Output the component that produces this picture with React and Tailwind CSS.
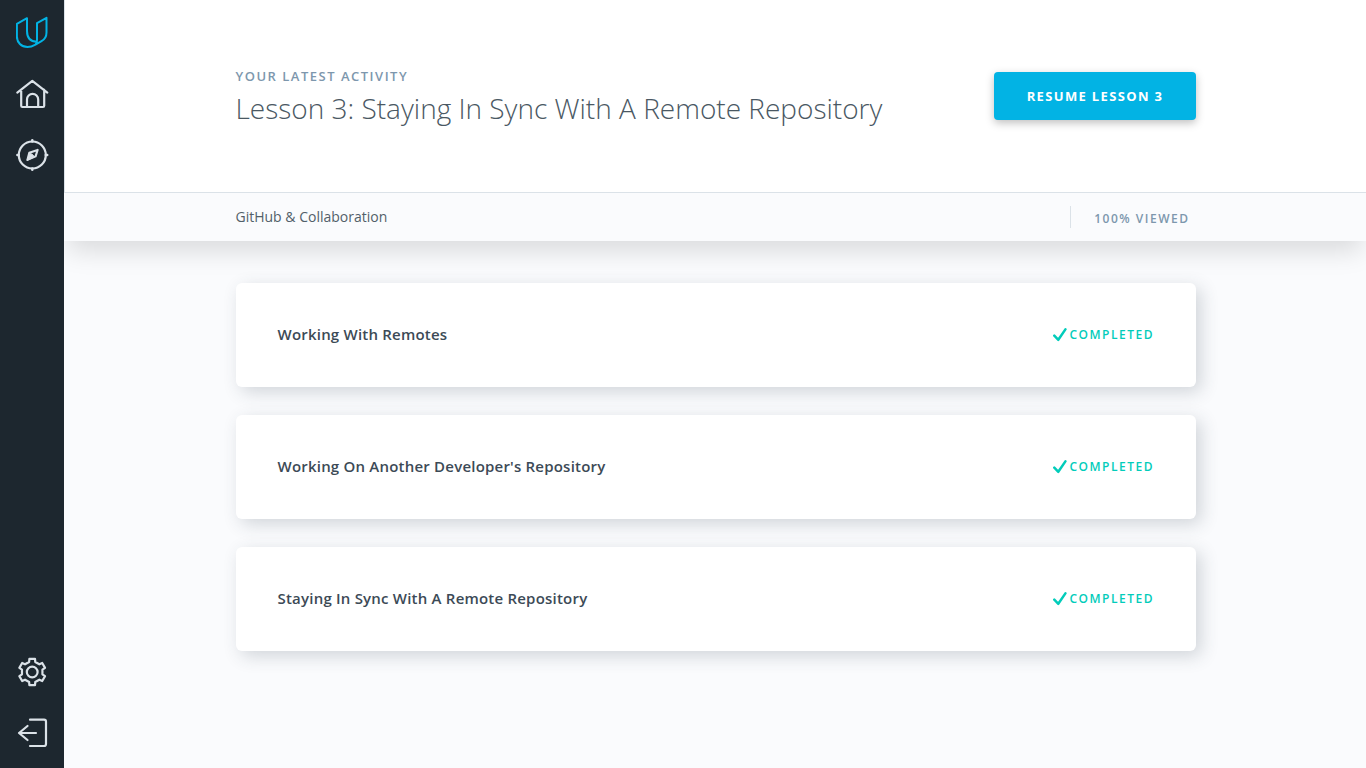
const lessons = [
  'Working With Remotes',
  "Working On Another Developer's Repository",
  'Staying In Sync With A Remote Repository',
];

const polar = (radius, degrees) => {
  const a = (degrees * Math.PI) / 180;
  return `${(16.2 + radius * Math.cos(a)).toFixed(2)} ${(16 + radius * Math.sin(a)).toFixed(2)}`;
};

const gearOutline = `M${[-90, -30, 30, 90, 150, 210]
  .flatMap((c) => [polar(10.5, c - 17), polar(13.5, c - 12), polar(13.5, c + 12), polar(10.5, c + 17)])
  .join('L')}Z`;

function Icon({ className, children }) {
  return (
    <svg
      width="32"
      height="32"
      viewBox="0 0 32 32"
      fill="none"
      stroke="currentColor"
      strokeWidth="2.2"
      strokeLinecap="round"
      strokeLinejoin="round"
      className={className}
    >
      {children}
    </svg>
  );
}

function Sidebar() {
  return (
    <aside className="relative z-10 flex w-16 shrink-0 flex-col items-center bg-[#1d272f] pt-4 pb-[19px] text-[#dbe2e8]">
      <Icon className="text-[#02b3e4]">
        <path strokeWidth="2" d="M11 2.2 0.9 7.8V20.5C0.9 26.5 5.3 31 11.5 31C14.5 31 17 30 19.5 28.6L25.5 25.2C29 23.2 30.5 20.5 30.5 16.5V1.8L21 7.2V22C21 25.5 21.4 27 19.5 28.6M11 2.2V15C11 21.5 14.5 25.6 20.8 25.8" />
      </Icon>
      <Icon className="mt-[30px] overflow-visible">
        <path d="M1.3 14.6 16.3 2.8 31.3 14.6M5.2 11.8V27.8Q5.2 29 6.4 29H27Q28.2 29 28.2 27.8V11.8M11 29V21.5a5.6 5.6 0 0 1 11.2 0V29" />
      </Icon>
      <Icon className="mt-[29px] overflow-visible">
        <circle cx="16.3" cy="16" r="13.5" />
        <path strokeWidth="2.5" d="M16.3 2.4V1.3M16.3 30.7V29.6M2.8 16H1.4M31.2 16H29.8" />
        <path strokeWidth="2.1" d="M21.6 10.9 19.6 17.4 11.4 20.9 13.3 13.8Z" />
        <path fill="currentColor" strokeWidth="1" d="M11.2 21.1 13.5 14.4 16.2 15.2 18.2 17.6Z" />
      </Icon>
      <Icon className="mt-auto">
        <path d={gearOutline} />
        <circle cx="16.2" cy="16" r="5.4" />
      </Icon>
      <Icon className="mt-[29px]">
        <path d="M14 2.7H28Q30 2.7 30 4.7V27Q30 29 28 29H14M20 16H3M11.5 9 3 16l8.5 7" />
      </Icon>
    </aside>
  );
}

function LessonCard({ title }) {
  return (
    <article className="flex h-[104px] items-center justify-between rounded-md bg-white pr-[42px] pl-[41.5px] shadow-[5px_5px_18px_0_rgba(46,61,73,0.2)]">
      <h2 className="-mt-0.5 text-[15px] leading-6 font-semibold tracking-[0.21px] text-[#3c4a56]">{title}</h2>
      <div className="flex items-center text-[#02ccba]">
        <svg width="14" height="14" viewBox="0 0 14 14" fill="none" stroke="currentColor" strokeWidth="2.5" strokeLinecap="round" strokeLinejoin="round">
          <path d="M1.3 7.7 5.3 11.8 12.4 1.4" />
        </svg>
        <span className="ml-[3px] text-xs font-semibold tracking-[1.5px] uppercase">Completed</span>
      </div>
    </article>
  );
}

export default function App() {
  return (
    <div className="flex h-screen w-full overflow-hidden bg-[#fafbfd] font-['Open_Sans',sans-serif]">
      <Sidebar />
      <main className="min-w-0 flex-1">
        <header className="shadow-[0_14px_24px_-4px_rgba(0,0,0,0.13)]">
          <div className="h-[193px] border-b border-l border-[#dbe2e8] bg-white pt-[68px]">
            <div className="ml-[170.5px] flex w-[960.5px] items-start justify-between">
              <div>
                <p className="text-[13px] leading-4 font-semibold tracking-[1.5px] text-[#7d97ad] uppercase">Your latest activity</p>
                <h1 className="mt-1 text-[28px] leading-[40px] font-light whitespace-nowrap text-[#4a5863]">Lesson 3: Staying In Sync With A Remote Repository</h1>
              </div>
              <button className="mt-1 h-12 w-[202px] rounded bg-[#02b3e4] pt-0.5 text-[13px] font-bold tracking-[1.35px] text-white uppercase shadow-[0_3px_8px_rgba(0,0,0,0.25)]">Resume Lesson 3</button>
            </div>
          </div>
          <div className="h-12 bg-[#fafbfd]">
            <div className="ml-[171.5px] flex h-full w-[960px] items-center justify-between">
              <span className="text-sm text-[#525f69]">GitHub &amp; Collaboration</span>
              <div className="mr-[6px] flex items-center">
                <span className="h-[22px] w-px bg-[#dbe2e8]" />
                <span className="mt-[4px] ml-[23.5px] text-[12px] leading-4 font-semibold tracking-[1.5px] text-[#7d97ad] uppercase">100% viewed</span>
              </div>
            </div>
          </div>
        </header>
        <section className="mt-[42px] ml-[172px] flex w-[960px] flex-col gap-7">
          {lessons.map((title) => (
            <LessonCard key={title} title={title} />
          ))}
        </section>
      </main>
    </div>
  );
}
